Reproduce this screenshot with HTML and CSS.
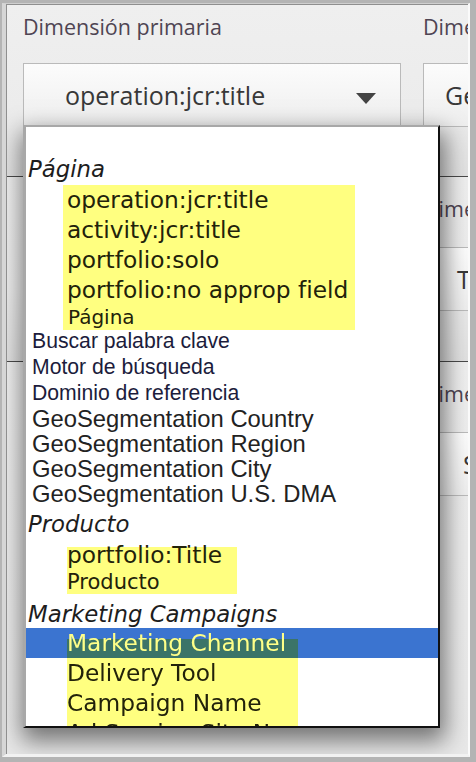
FILE: index.html
```html
<!DOCTYPE html>
<html lang="es">
<head>
<meta charset="utf-8">
<title>Dimensión primaria</title>
<link rel="stylesheet" href="styles.css">
</head>
<body>
<div class="frame">
  <div class="bevel">
    <div class="panel">
      <section class="sec sec-first">
        <div class="col">
          <div class="label">Dimensión primaria</div>
          <div class="box dropdown">
            <span class="val">operation:jcr:title</span>
            <svg class="caret" width="20" height="11" viewBox="0 0 20 11"><polygon points="0,0 20,0 10,11" fill="#444"/></svg>
          </div>
        </div>
        <div class="col">
          <div class="label">Dimensión secundaria</div>
          <div class="box p-ge"><span class="val">GeoSegmentation Country</span></div>
        </div>
      </section>
      <section class="sec">
        <div class="col">
          <div class="label">Dimensión primaria</div>
          <div class="box p-in"><span class="val">Tipo de tráfico</span></div>
        </div>
        <div class="col">
          <div class="label">Dimensión secundaria</div>
          <div class="box p-t"><span class="val">Tipo</span></div>
        </div>
      </section>
      <section class="sec sec-last">
        <div class="col">
          <div class="label">Dimensión primaria</div>
          <div class="box p-in"><span class="val">Sitio</span></div>
        </div>
        <div class="col">
          <div class="label">Dimensión secundaria</div>
          <div class="box p-s"><span class="val">Sitio</span></div>
        </div>
      </section>

      <div class="popup">
        <div class="hdr hdr1">Página</div>
        <div class="hl g1">
          <div class="it">operation:jcr:title</div>
          <div class="it">activity:jcr:title</div>
          <div class="it">portfolio:solo</div>
          <div class="it">portfolio:no approp field</div>
          <div class="sub">Página</div>
        </div>
        <div class="plain s">Buscar palabra clave</div>
        <div class="plain s">Motor de búsqueda</div>
        <div class="plain s">Dominio de referencia</div>
        <div class="plain l">GeoSegmentation Country</div>
        <div class="plain l">GeoSegmentation Region</div>
        <div class="plain l">GeoSegmentation City</div>
        <div class="plain l">GeoSegmentation U.S. DMA</div>
        <div class="hdr hdr2">Producto</div>
        <div class="hl g2">
          <div class="it">portfolio:Title</div>
          <div class="sub">Producto</div>
        </div>
        <div class="hdr hdr3">Marketing Campaigns</div>
        <div class="g3">
          <div class="it sel">Marketing Channel</div>
          <div class="it">Delivery Tool</div>
          <div class="it">Campaign Name</div>
          <div class="it">Ad Serving Site Name</div>
        </div>
      </div>
    </div>
  </div>
</div>
</body>
</html>
```
FILE: styles.css
```css
* { box-sizing: border-box; }
html, body { margin: 0; padding: 0; }
body { width: 476px; height: 762px; overflow: hidden; background: #b4b4b4; }

.frame { height: 762px; padding: 3px 6px 5px 2px; background: #b4b4b4; }
.bevel {
  height: 100%;
  border-left: 4px solid #d6d6d6;
  border-top: 1px solid #cfcfcf;
  border-right: 2px solid #fafafa;
  border-bottom: 3px solid #f2f2f2;
}
.panel {
  height: 100%;
  border-left: 1px solid #8f8f8f;
  border-top: 1px solid #8f8f8f;
  position: relative;
  overflow: hidden;
  background: #e9e9e9;
  display: flex;
  flex-direction: column;
}

.sec {
  display: grid;
  grid-template-columns: 378px 378px;
  column-gap: 22px;
  padding: 17px 0 0 16px;
  height: 185px;
  flex: none;
  border-bottom: 1px solid #4a4a4a;
  background: linear-gradient(#efefef 0%, #ececec 60%, #e1e1e1 100%);
}
.sec-first { padding-top: 7px; height: 172px; }
.sec-last { flex: 1; border-bottom: 0; background: linear-gradient(#efefef 0, #ececec 30%, #e8e8e8 100%); }

.col { display: flex; flex-direction: column; gap: 23px; }
.sec-first .col { gap: 21px; }

.label {
  font-family: "Open Sans", sans-serif;
  font-size: 21.5px;
  line-height: 30px;
  height: 30px;
  color: #4f4553;
  white-space: nowrap;
}

.box {
  height: 64px;
  border: 1px solid #bababa;
  background: linear-gradient(#fcfcfc, #eeeeee);
  display: flex;
  align-items: center;
  font-family: "Open Sans", sans-serif;
  font-size: 25px;
  line-height: 62px;
  color: #383838;
  white-space: nowrap;
  overflow: hidden;
}
.dropdown { justify-content: space-between; padding: 0 24px 0 41px; }
.caret { align-self: flex-start; margin-top: 29px; flex: none; }
.p-ge { padding-left: 21px; }
.p-in { padding-left: 41px; }
.p-t { padding-left: 33px; }
.p-s { padding-left: 39px; }

.popup {
  position: absolute;
  left: 16px;
  top: 120px;
  width: 417px;
  height: 603px;
  border-style: solid;
  border-width: 2px 2px 2px 3px;
  border-color: #a8a8a8 #111 #111 #a8a8a8;
  background: #fff;
  box-shadow: 2px 10px 22px 3px rgba(0, 0, 0, 0.5);
  overflow: hidden;
  padding-top: 29px;
}

.hdr {
  font-family: "DejaVu Sans", sans-serif;
  font-style: italic;
  font-size: 22.8px;
  line-height: 26px;
  height: 26px;
  color: #1d1d1d;
  padding-left: 2px;
  white-space: nowrap;
}
.hdr1 { margin-bottom: 3px; }
.hdr2 { margin-top: 5px; }
.hdr3 { margin-top: 7px; margin-bottom: 1px; }

.hl {
  background: #ffff80;
  width: fit-content;
  font-family: "DejaVu Sans", sans-serif;
  color: #22220a;
  white-space: nowrap;
}
.g1 { margin-left: 37px; padding: 0 7px 0 4px; margin-bottom: -2px; }
.g1 .it { font-size: 23.3px; line-height: 30px; height: 30px; }
.g1 .sub { font-size: 20px; line-height: 25px; height: 25px; padding-left: 1px; }

.plain {
  padding-left: 6px;
  font-family: "Liberation Sans", Arial, sans-serif;
  white-space: nowrap;
}
.plain.s { font-size: 21.2px; line-height: 26px; height: 26px; color: #1c1c3c; }
.plain.l { font-size: 23.8px; line-height: 25px; height: 25px; color: #222; }

.g2 { margin-left: 41px; margin-top: 10px; padding-right: 15px; }
.g2 .it { font-size: 23.3px; line-height: 16px; height: 16px; }
.g2 .sub { font-size: 21px; line-height: 23px; height: 31px; padding-top: 8px; }

.g3 { position: relative; isolation: isolate; }
.g3::before {
  content: "";
  position: absolute;
  left: 0;
  right: 0;
  top: 0;
  height: 30px;
  background: #3b74d0;
  z-index: 0;
}
.g3::after {
  content: "";
  position: absolute;
  left: 41px;
  width: 231px;
  top: 11px;
  bottom: 0;
  background: #ffff80;
  mix-blend-mode: multiply;
  z-index: 1;
}
.g3 .it {
  position: relative;
  z-index: 2;
  padding-left: 41px;
  font-family: "DejaVu Sans", sans-serif;
  font-size: 23.3px;
  line-height: 30px;
  height: 30px;
  color: #22220a;
  white-space: nowrap;
}
.g3 .sel { color: #ffff88; }
```
